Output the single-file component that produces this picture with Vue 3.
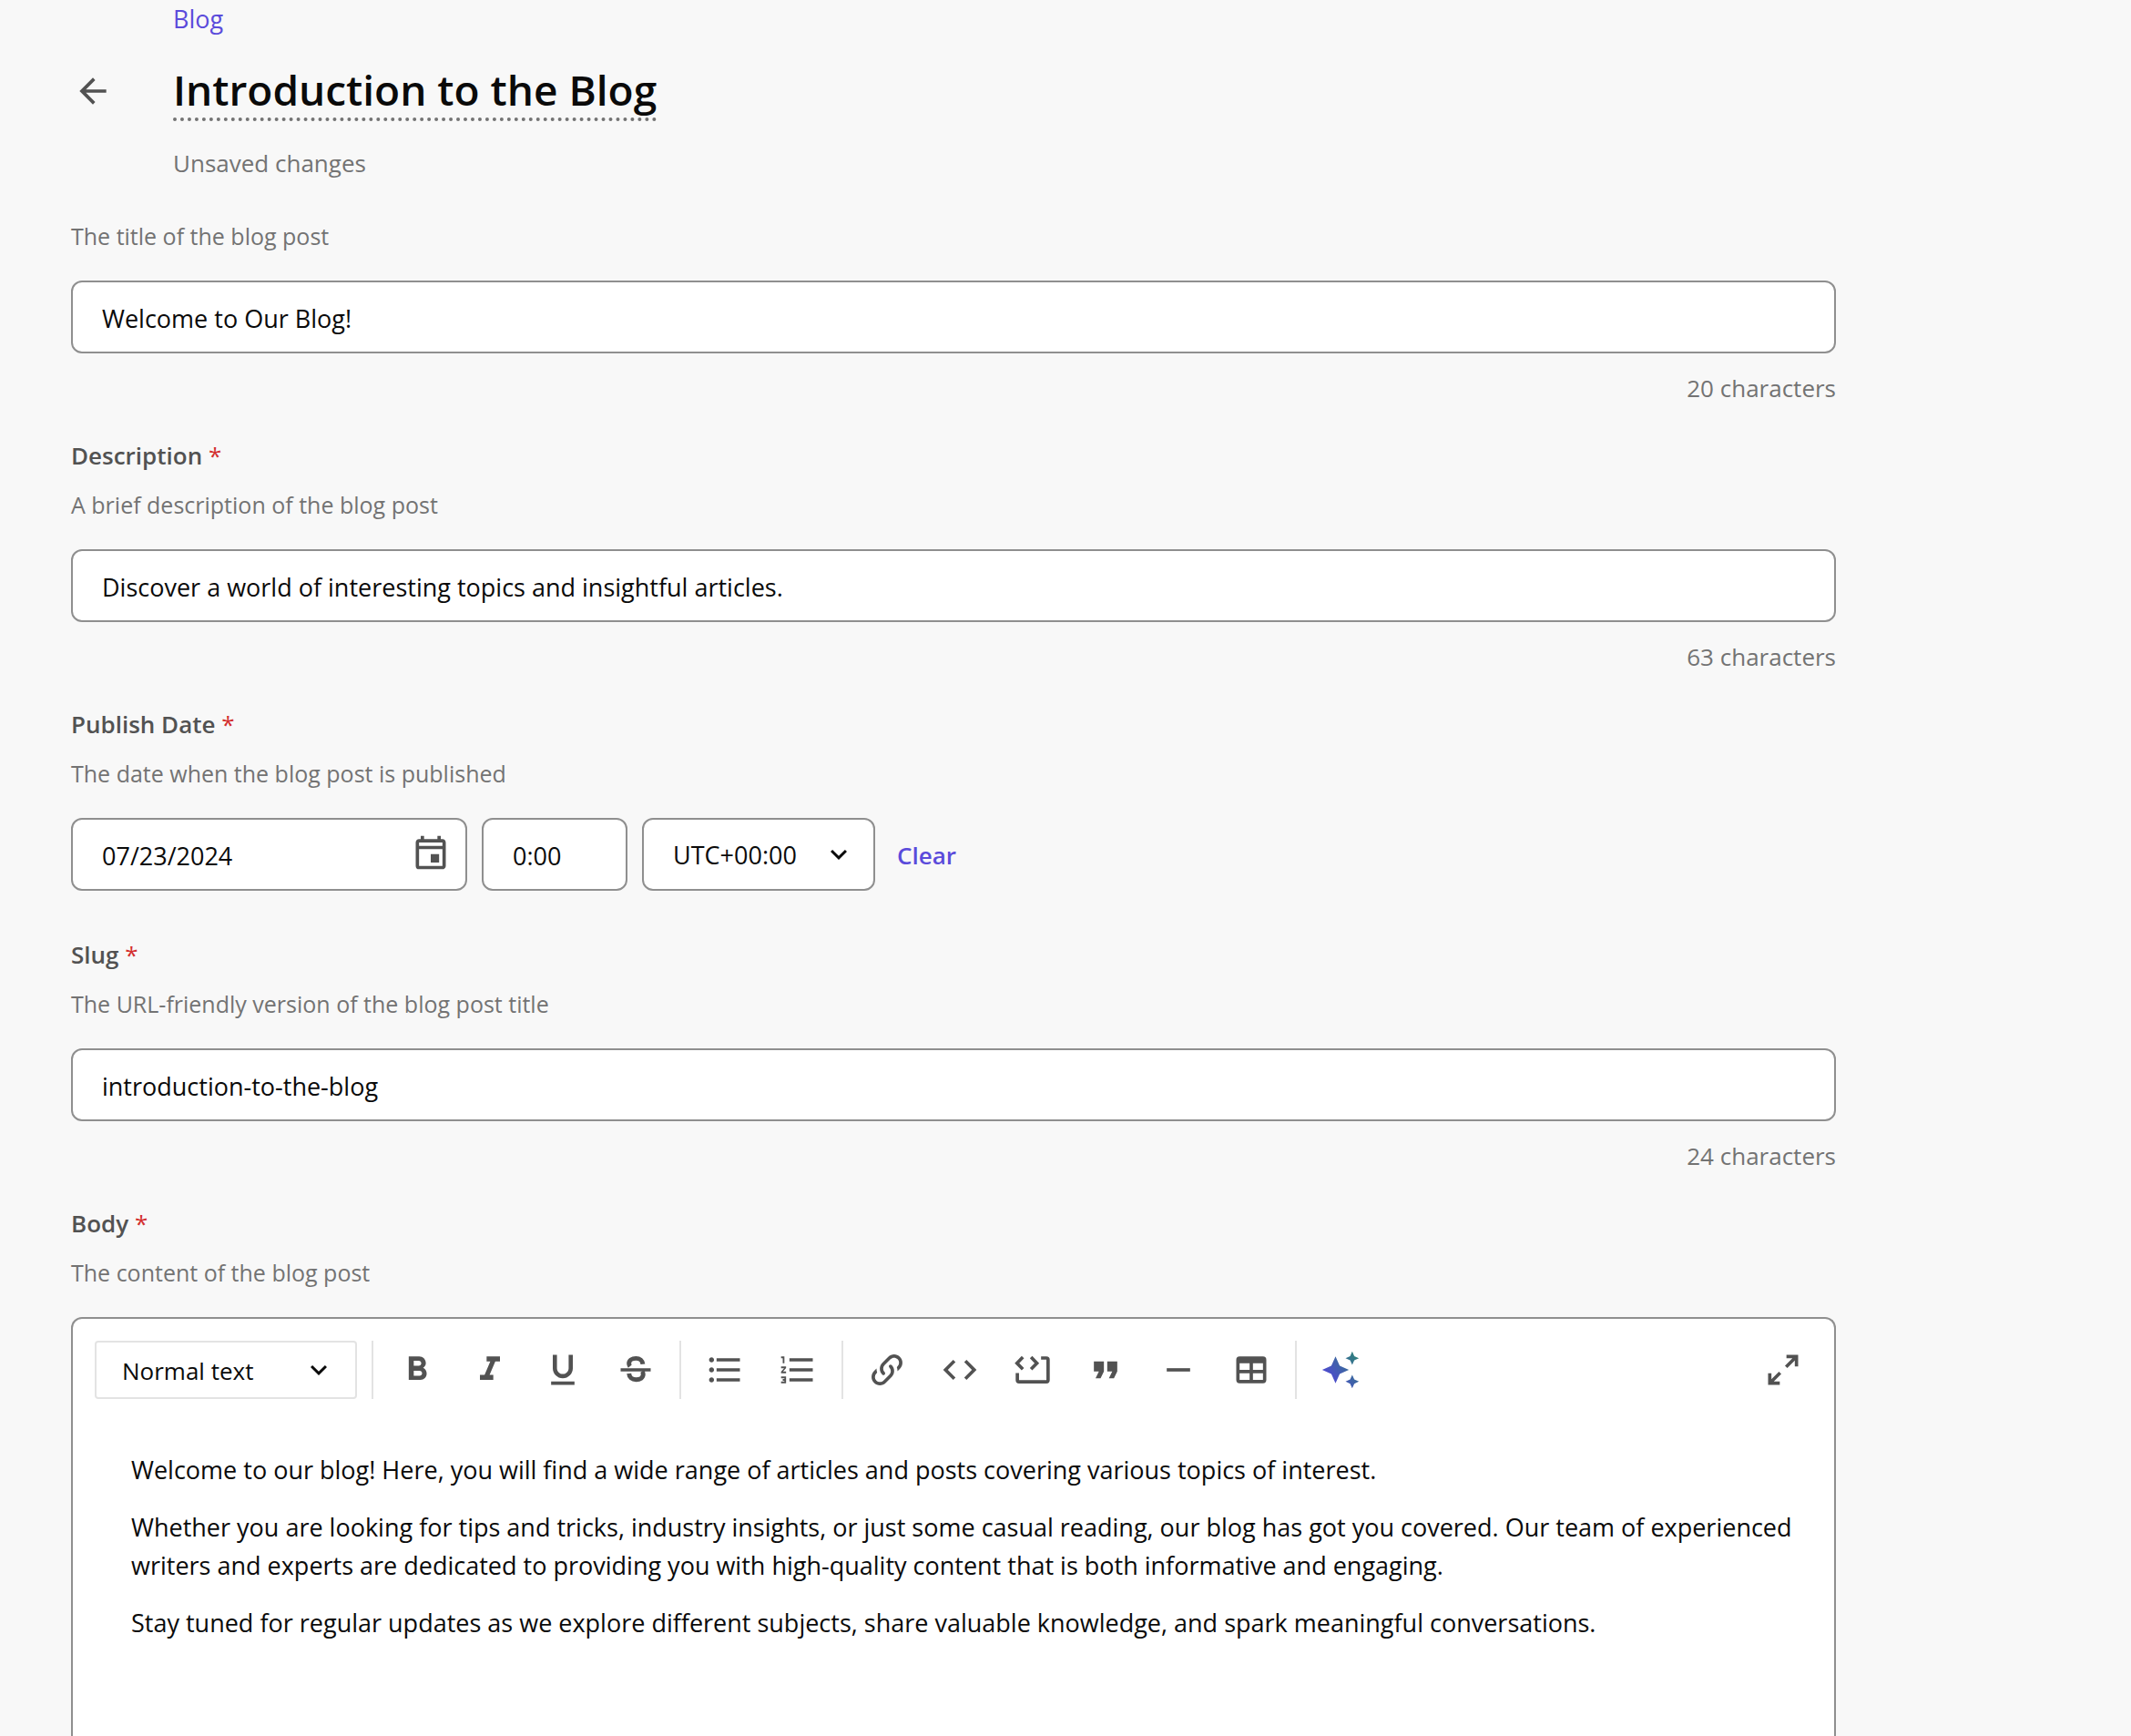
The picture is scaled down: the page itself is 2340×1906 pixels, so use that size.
<script setup>
import { ref } from 'vue'

const title = ref('Welcome to Our Blog!')
const description = ref('Discover a world of interesting topics and insightful articles.')
const slug = ref('introduction-to-the-blog')
const date = ref('07/23/2024')
const time = ref('0:00')
const zone = ref('UTC+00:00')
const textStyle = ref('Normal text')

const toolGroups = [
  [
    { name: 'Bold', path: 'M15.6 10.79c.97-.67 1.65-1.77 1.65-2.79 0-2.26-1.75-4-4-4H7v14h7.04c2.09 0 3.71-1.7 3.71-3.79 0-1.52-.86-2.82-2.15-3.42zM10 6.5h3c.83 0 1.5.67 1.5 1.5s-.67 1.5-1.5 1.5h-3v-3zm3.5 9H10v-3h3.5c.83 0 1.5.67 1.5 1.5s-.67 1.5-1.5 1.5z' },
    { name: 'Italic', path: 'M10 4v3h2.21l-3.42 8H6v3h8v-3h-2.21l3.42-8H18V4z' },
    { name: 'Underline', path: 'M12 17c3.31 0 6-2.69 6-6V3h-2.5v8c0 1.93-1.57 3.5-3.5 3.5S8.5 12.93 8.5 11V3H6v8c0 3.31 2.69 6 6 6zm-7 2v2h14v-2H5z' },
    { name: 'Strikethrough', path: 'M3 11h18v2H3z', stroke: 'M16.3 8.6C16.1 6.4 14.5 5.1 12.2 5.1c-2.5 0-4.2 1.3-4.2 3.1 0 .7.2 1.2.6 1.7M8 14.2c.2 2.2 1.8 3.7 4.3 3.7 2.4 0 4.2-1.3 4.2-3.3 0-.7-.2-1.3-.6-1.8', width: 2.7 },
  ],
  [
    { name: 'Bulleted list', path: 'M4 10.5c-.83 0-1.5.67-1.5 1.5s.67 1.5 1.5 1.5 1.5-.67 1.5-1.5-.67-1.5-1.5-1.5zm0-6c-.83 0-1.5.67-1.5 1.5S3.17 7.5 4 7.5 5.5 6.83 5.5 6 4.83 4.5 4 4.5zm0 12c-.83 0-1.5.68-1.5 1.5s.68 1.5 1.5 1.5 1.5-.68 1.5-1.5-.67-1.5-1.5-1.5zM7 19h14v-2H7v2zm0-6h14v-2H7v2zm0-8v2h14V5H7z' },
    { name: 'Numbered list', path: 'M2 17h2v.5H3v1h1v.5H2v1h3v-4H2v1zm1-9h1V4H2v1h1v3zm-1 3h1.8L2 13.1v.9h3v-1H3.2L5 10.9V10H2v1zm5-6v2h14V5H7zm0 14h14v-2H7v2zm0-6h14v-2H7v2z' },
  ],
  [
    { name: 'Link', path: 'M10.59 13.41C11 13.8 11 14.44 10.59 14.83C10.2 15.22 9.56 15.22 9.17 14.83C7.22 12.88 7.22 9.71 9.17 7.76L12.71 4.22C14.66 2.27 17.83 2.27 19.78 4.22C21.73 6.17 21.73 9.34 19.78 11.29L18.29 12.78C18.3 11.96 18.17 11.14 17.89 10.36L18.36 9.88C19.54 8.71 19.54 6.81 18.36 5.64C17.19 4.46 15.29 4.46 14.12 5.64L10.59 9.17C9.41 10.34 9.41 12.24 10.59 13.41M13.41 9.17C13.8 8.78 14.44 8.78 14.83 9.17C16.78 11.12 16.78 14.29 14.83 16.24L11.29 19.78C9.34 21.73 6.17 21.73 4.22 19.78C2.27 17.83 2.27 14.66 4.22 12.71L5.71 11.22C5.7 12.04 5.83 12.86 6.11 13.65L5.64 14.12C4.46 15.29 4.46 17.19 5.64 18.36C6.81 19.54 8.71 19.54 9.88 18.36L13.41 14.83C14.59 13.66 14.59 11.76 13.41 10.59C13 10.2 13 9.56 13.41 9.17Z' },
    { name: 'Inline code', path: 'M9.4 16.6L4.8 12l4.6-4.6L8 6l-6 6 6 6 1.4-1.4zm5.2 0l4.6-4.6-4.6-4.6L16 6l6 6-6 6-1.4-1.4z' },
    { name: 'Code block', stroke: 'M6.1 4.4 2.6 8l3.5 3.6M11 4.4 14.5 8 11 11.6M17 4.9h3.2a1 1 0 0 1 1 1v12.3a1 1 0 0 1-1 1H3.8a1 1 0 0 1-1-1V13.9', width: 2 },
    { name: 'Quote', path: 'M6 17h3l2-4V7H5v6h3zm8 0h3l2-4V7h-6v6h3z' },
    { name: 'Horizontal rule', path: 'M19 13H5v-2h14z' },
    { name: 'Table', path: 'M5 4H19A2 2 0 0 1 21 6V18A2 2 0 0 1 19 20H5A2 2 0 0 1 3 18V6A2 2 0 0 1 5 4M5 8V12H11V8H5M13 8V12H19V8H13M5 14V18H11V14H5M13 14V18H19V14H13Z' },
  ],
]

function clearDate() {
  date.value = ''
  time.value = ''
}
</script>

<template>
  <main class="page">
    <header class="header">
      <a class="crumb" href="#blog">Blog</a>
      <button class="icon-button back" type="button" aria-label="Back">
        <svg class="icon" viewBox="0 0 24 24"><path d="M20 11H7.83l5.59-5.59L12 4l-8 8 8 8 1.41-1.41L7.83 13H20z" /></svg>
      </button>
      <h1 class="title">Introduction to the Blog</h1>
      <p class="status">Unsaved changes</p>
    </header>

    <form class="form" @submit.prevent>
      <section class="field">
        <label class="help" for="title">The title of the blog post</label>
        <input id="title" v-model="title" class="control" type="text" />
        <p class="counter">{{ title.length }} characters</p>
      </section>

      <section class="field">
        <label class="label" for="description">Description <span class="required">*</span></label>
        <p class="help">A brief description of the blog post</p>
        <input id="description" v-model="description" class="control" type="text" />
        <p class="counter">{{ description.length }} characters</p>
      </section>

      <section class="field field-date">
        <label class="label" for="date">Publish Date <span class="required">*</span></label>
        <p class="help">The date when the blog post is published</p>
        <div class="date-row">
          <div class="date-box">
            <input id="date" v-model="date" class="control" type="text" />
            <svg class="icon calendar" viewBox="0 0 24 24"><path d="M19 4h-1V2h-2v2H8V2H6v2H5c-1.1 0-2 .9-2 2v14a2 2 0 0 0 2 2h14c1.1 0 2-.9 2-2V6c0-1.1-.9-2-2-2zm0 16H5V10h14v10zm0-12H5V6h14v2zm-7 5h5v5h-5z" /></svg>
          </div>
          <input v-model="time" class="control time" type="text" aria-label="Time" />
          <div class="select-box zone">
            <select v-model="zone" class="control" aria-label="Time zone">
              <option>UTC+00:00</option>
            </select>
            <svg class="chevron" viewBox="0 0 24 24"><path d="M16.59 8.59 12 13.17 7.41 8.59 6 10l6 6 6-6z" /></svg>
          </div>
          <button class="clear" type="button" @click="clearDate">Clear</button>
        </div>
      </section>

      <section class="field">
        <label class="label" for="slug">Slug <span class="required">*</span></label>
        <p class="help">The URL-friendly version of the blog post title</p>
        <input id="slug" v-model="slug" class="control" type="text" />
        <p class="counter">{{ slug.length }} characters</p>
      </section>

      <section class="field field-body">
        <span id="body-label" class="label">Body <span class="required">*</span></span>
        <p class="help">The content of the blog post</p>
        <div class="editor">
          <div class="toolbar" role="toolbar" aria-label="Formatting">
            <div class="select-box text-style">
              <select v-model="textStyle" aria-label="Text style">
                <option>Normal text</option>
              </select>
              <svg class="chevron" viewBox="0 0 24 24"><path d="M16.59 8.59 12 13.17 7.41 8.59 6 10l6 6 6-6z" /></svg>
            </div>
            <div v-for="(group, i) in toolGroups" :key="i" class="group">
              <button v-for="tool in group" :key="tool.name" class="icon-button" type="button" :aria-label="tool.name">
                <svg class="icon" viewBox="0 0 24 24">
                  <path v-if="tool.path" :d="tool.path" />
                  <path v-if="tool.stroke" class="line" :d="tool.stroke" :stroke-width="tool.width" />
                </svg>
              </button>
            </div>
            <div class="group">
              <button class="icon-button" type="button" aria-label="AI assistant">
                <svg class="icon" viewBox="0 0 24 24">
                  <defs>
                    <linearGradient id="spark" gradientUnits="userSpaceOnUse" x1="3" y1="17" x2="21" y2="3">
                      <stop offset="0" stop-color="#5046d6" />
                      <stop offset="1" stop-color="#2f7f7c" />
                    </linearGradient>
                  </defs>
                  <path fill="url(#spark)" d="M19 9l1.25-2.75L23 5l-2.75-1.25L19 1l-1.25 2.75L15 5l2.75 1.25zm0 6l-1.25 2.75L15 19l2.75 1.25L19 23l1.25-2.75L23 19l-2.75-1.25zM11.5 9.5L9 4 6.5 9.5 1 12l5.5 2.5L9 20l2.5-5.5L17 12z" />
                </svg>
              </button>
            </div>
            <button class="icon-button expand" type="button" aria-label="Expand editor">
              <svg class="icon" viewBox="0 0 24 24"><path d="M10 21V19H6.41L10.91 14.5L9.5 13.09L5 17.59V14H3V21H10M14.5 10.91L19 6.41V10H21V3H14V5H17.59L13.09 9.5L14.5 10.91Z" /></svg>
            </button>
          </div>
          <div class="content" contenteditable="true" role="textbox" aria-multiline="true" aria-labelledby="body-label" spellcheck="false">
            <p>Welcome to our blog! Here, you will find a wide range of articles and posts covering various topics of interest.</p>
            <p>Whether you are looking for tips and tricks, industry insights, or just some casual reading, our blog has got you covered. Our team of experienced writers and experts are dedicated to providing you with high-quality content that is both informative and engaging.</p>
            <p>Stay tuned for regular updates as we explore different subjects, share valuable knowledge, and spark meaningful conversations.</p>
          </div>
        </div>
      </section>
    </form>
  </main>
</template>

<style>
body {
  background: #f8f8f8;
}
</style>

<style scoped>
.page {
  box-sizing: border-box;
  display: flex;
  flex-direction: column;
  min-height: 100vh;
  padding: 1px 324px 0 78px;
  background: #f8f8f8;
  color: #0a0a0a;
  font-family: "Open Sans", "Noto Sans", sans-serif;
  font-size: 26px;
  line-height: 40px;
}

p,
h1 {
  margin: 0;
}

input,
select,
button {
  box-sizing: border-box;
  margin: 0;
  font: inherit;
  color: inherit;
}

button {
  padding: 0;
  border: 0;
  background: none;
}

.header {
  display: grid;
  grid-template-columns: 112px 1fr;
  align-items: center;
  justify-items: start;
}

.crumb {
  grid-column: 2;
  color: #5b4bdb;
  font-size: 27px;
  text-decoration: none;
}

.title {
  margin: 26px 0;
  border-bottom: 4px dotted #737373;
  font-size: 46px;
  font-weight: 600;
  line-height: 62px;
}

.status {
  grid-column: 2;
  color: #737373;
}

.icon-button {
  display: flex;
  align-items: center;
  justify-content: center;
  width: 64px;
  height: 64px;
}

.back {
  width: 48px;
}

.icon {
  width: 44px;
  height: 44px;
  fill: #525252;
}

.line {
  fill: none;
  stroke: #525252;
}

.form {
  display: flex;
  flex: 1;
  flex-direction: column;
  margin-top: 40px;
}

.field {
  display: flex;
  flex-direction: column;
  margin-bottom: 34px;
}

.field-date {
  margin-bottom: 50px;
}

.field-body {
  flex: 1;
  margin-bottom: 0;
}

.label {
  margin-bottom: 14px;
  color: #525252;
  font-weight: 600;
}

.required {
  color: #d32f2f;
  font-weight: 400;
}

.help {
  margin-bottom: 29px;
  color: #737373;
  font-size: 25px;
}

.control {
  width: 100%;
  height: 80px;
  padding: 2px 32px 0;
  border: 2px solid #8f8f8f;
  border-radius: 12px;
  outline: none;
  background: #fff;
  font-size: 27px;
}

.counter {
  margin-top: 18px;
  color: #737373;
  text-align: right;
}

.date-row {
  display: flex;
  align-items: center;
  gap: 16px;
}

.date-box {
  position: relative;
  width: 435px;
}

.calendar {
  position: absolute;
  top: 16px;
  right: 18px;
}

.time {
  width: 160px;
}

.select-box {
  position: relative;
}

.select-box select {
  width: 100%;
  appearance: none;
}

.zone {
  width: 256px;
}

.chevron {
  position: absolute;
  top: 50%;
  right: 16px;
  width: 36px;
  height: 36px;
  margin-top: -18px;
  fill: #0a0a0a;
  pointer-events: none;
}

.zone .chevron {
  right: 22px;
}

.clear {
  margin-left: 8px;
  padding-top: 2px;
  color: #5b4bdb;
  font-weight: 600;
}

.editor {
  flex: 1;
  border: 2px solid #8f8f8f;
  border-bottom: 0;
  border-radius: 12px 12px 0 0;
  background: #fff;
}

.toolbar {
  display: flex;
  align-items: center;
  gap: 16px;
  padding: 24px;
}

.text-style {
  width: 288px;
}

.text-style select {
  height: 64px;
  padding: 2px 28px 0;
  border: 2px solid #e3e3e3;
  border-radius: 4px;
  background: #fff;
}

.text-style .chevron {
  right: 24px;
}

.group {
  display: flex;
  gap: 16px;
  padding-left: 16px;
  border-left: 2px solid #e3e3e3;
}

.expand {
  margin-left: auto;
}

.content {
  display: flex;
  flex-direction: column;
  gap: 21px;
  padding: 33px 32px 33px 64px;
  outline: none;
  font-size: 27px;
  line-height: 42px;
}
</style>
